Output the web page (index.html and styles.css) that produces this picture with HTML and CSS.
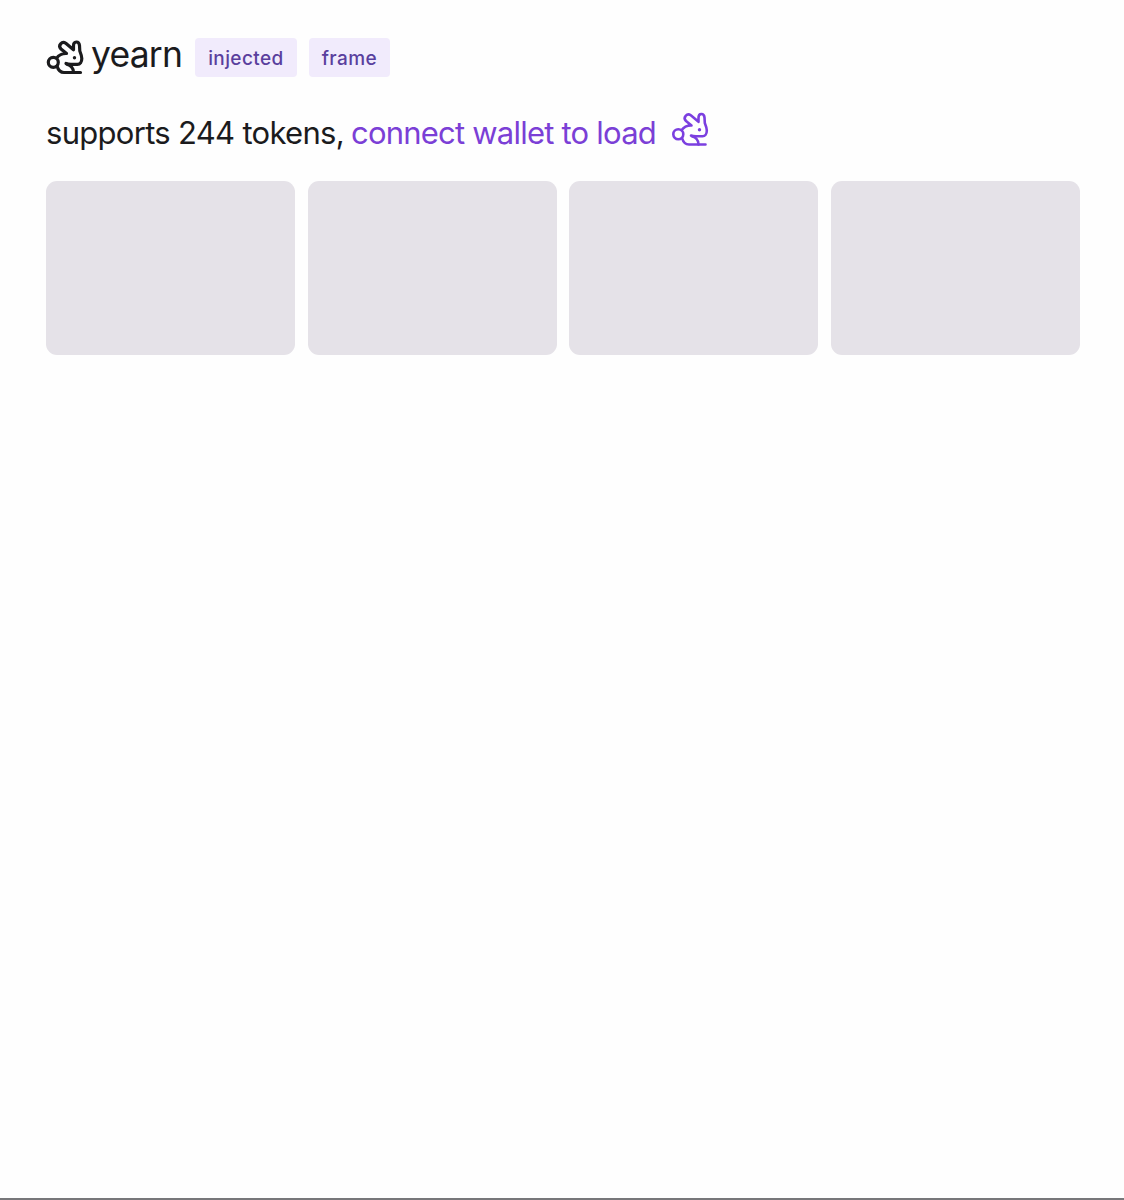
FILE: index.html
```html
<!DOCTYPE html>
<html lang="en">
<head>
<meta charset="utf-8">
<title>yearn</title>
<link rel="stylesheet" href="styles.css">
</head>
<body>
<main class="page">
  <header class="head">
    <svg class="rabbit rabbit-dark" viewBox="0 0 38 38" aria-hidden="true">
      <use href="#rabbit"></use>
    </svg>
    <h1 class="title">yearn</h1>
    <span class="tag">injected</span>
    <span class="tag">frame</span>
  </header>
  <p class="line">
    <span class="lead">supports 244 tokens,</span>
    <a class="connect" href="#">connect wallet to load</a>
    <svg class="rabbit rabbit-purple" viewBox="0 0 38 38" aria-hidden="true">
      <g id="rabbit">
        <circle class="stroke" cx="7.300" cy="24.300" r="5"/>
        <path class="stroke" d="M10.500 20.300C12.800 17 16 15.300 20.500 15.500L15 11C11.500 7.500 16 2.700 19.800 5.300L27.500 11.800V7.800C27.500 2.800 33 2.800 33.500 7.500L33.800 13C35 16 35.800 18 35.800 20.500C35.800 24 34 26.300 31.500 26.300H25C23 26.300 21.500 26.200 20 25.500"/>
        <path class="stroke" d="M11 28C12.300 32.500 14.500 34.500 18 34.500H34.500"/>
        <path class="stroke" d="M21 26.300C25 27.500 27.500 30.500 27.500 34.500"/>
        <circle class="eye" cx="28.500" cy="19.700" r="1.700"/>
      </g>
    </svg>
  </p>
  <section class="cards">
    <div class="card"></div>
    <div class="card"></div>
    <div class="card"></div>
    <div class="card"></div>
  </section>
</main>
</body>
</html>
```

FILE: styles.css
```css
html, body {
  margin: 0;
  height: 100%;
}
body {
  background: #fefefe;
  color: #1b1b1d;
  font-family: Inter, "Liberation Sans", sans-serif;
  box-sizing: border-box;
  border-bottom: 2px solid #77777a;
  overflow: hidden;
}
.page {
  padding: 37px 44px 0 46px;
}
.head {
  display: flex;
  align-items: center;
  height: 40px;
}
.rabbit {
  width: 38px;
  height: 38px;
  flex: none;
  overflow: visible;
}
.rabbit-dark {
  color: #1b1b1d;
  margin-right: 7px;
  --sw: 3.200;
}
.rabbit-purple {
  color: #7b3fe0;
  margin: -7px 0 0 8px;
  --sw: 2.600;
}
.stroke {
  fill: none;
  stroke: currentColor;
  stroke-width: var(--sw);
  stroke-linecap: round;
  stroke-linejoin: round;
}
.eye {
  fill: currentColor;
}
.title {
  margin: -4px 13px 0 0;
  font-size: 35.500px;
  font-weight: 400;
  letter-spacing: -0.800px;
  line-height: 40px;
}
.tag {
  display: flex;
  align-items: center;
  height: 37px;
  padding: 2px 13px 0;
  margin-right: 12px;
  border-radius: 4px;
  background: #f1ebfc;
  color: #5a3f9e;
  font-size: 19px;
  font-weight: 500;
  letter-spacing: 0.400px;
}
.line {
  display: flex;
  align-items: center;
  gap: 7px;
  margin: 36px 0 0;
  height: 38px;
  font-size: 31px;
}
.lead {
  letter-spacing: -0.700px;
}
.connect {
  color: #7b3fd6;
  text-decoration: none;
  letter-spacing: -0.780px;
}
.cards {
  display: grid;
  grid-template-columns: repeat(4, 1fr);
  gap: 12.800px;
  margin-top: 30px;
}
.card {
  height: 174px;
  border-radius: 11px;
  background: #e5e2e8;
}
```
